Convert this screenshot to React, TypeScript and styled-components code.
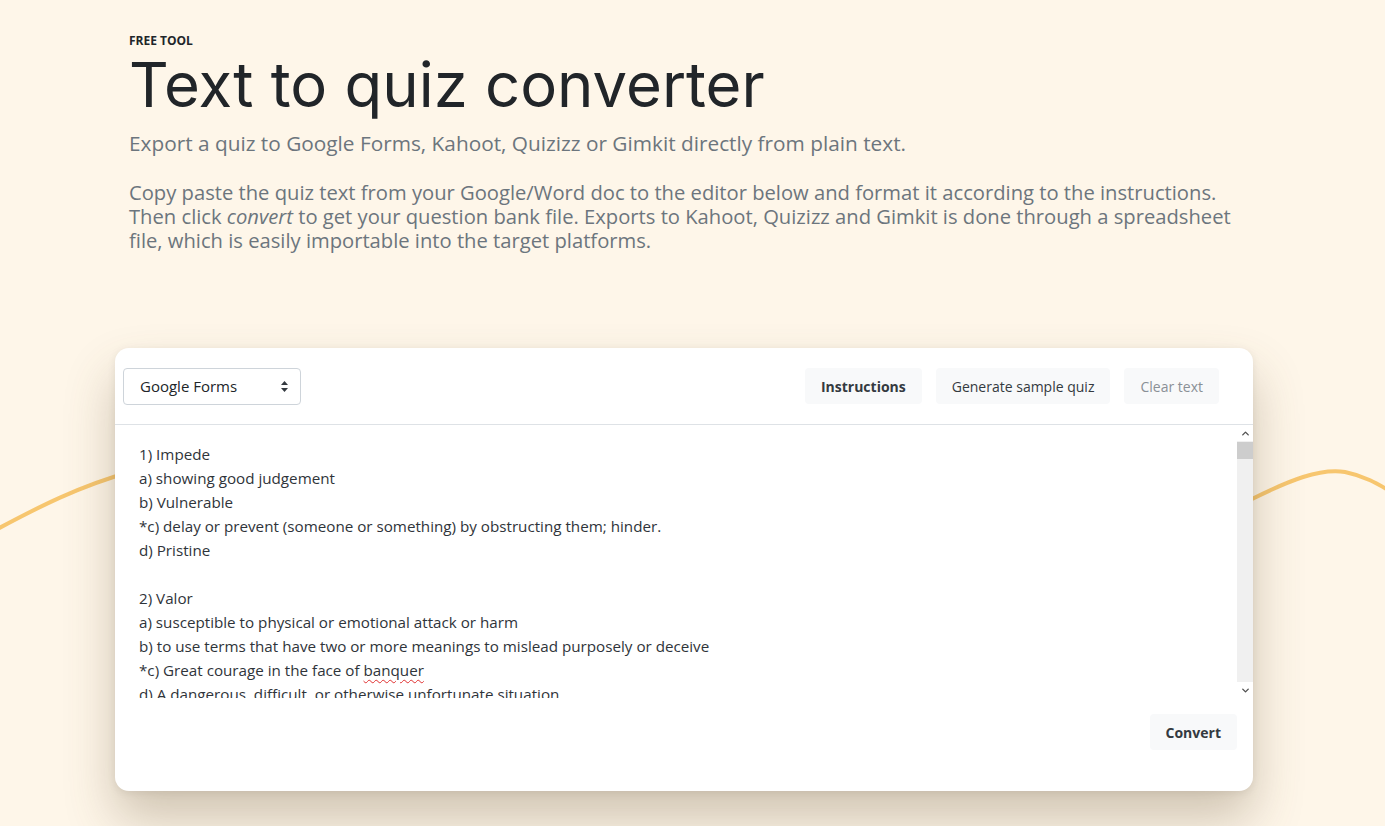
import React from "react";
import styled, { createGlobalStyle } from "styled-components";
import { ChevronUp, ChevronDown } from "lucide-react";

const GlobalStyle = createGlobalStyle`
    html, body {
        margin: 0;
        padding: 0;
        background-color: #fef6e9;
    }
    body {
        font-family: 'Open Sans', 'Liberation Sans', sans-serif;
        color: #212529;
    }
`;

const Page = styled.div`
    position: relative;
    width: 100%;
    min-height: 826px;
    overflow: hidden;
`;

const Wave = styled.svg`
    position: absolute;
    top: 0;
    left: 0;
    width: 100%;
    height: 826px;
    z-index: 0;
    pointer-events: none;
`;

const Header = styled.header`
    position: relative;
    z-index: 1;
    width: 1110px;
    padding: 33px 0 0 129px;
`;

const Kicker = styled.div`
    font-size: 12px;
    font-weight: 700;
    line-height: 16px;
    text-transform: uppercase;
    color: #212529;
`;

const Title = styled.h1`
    margin: 0;
    font-family: 'Inter', 'Liberation Sans', sans-serif;
    font-weight: 400;
    font-size: 61.6px;
    line-height: 72px;
    letter-spacing: 0;
    color: #212529;
`;

const Lead = styled.p`
    margin: 8px 0 0;
    font-size: 20.8px;
    line-height: 28px;
    color: #6c757d;
`;

const Body = styled.p`
    margin: 23px 0 0;
    font-size: 20.2px;
    line-height: 24px;
    color: #6c757d;
`;

const Card = styled.section`
    position: relative;
    z-index: 1;
    width: 1138px;
    margin: 96px 0 0 115px;
    background: #fff;
    border-radius: 14px;
    box-shadow: 0 28px 50px rgba(100, 80, 50, 0.3), 0 2px 8px rgba(0, 0, 0, 0.08);
    display: flex;
    flex-direction: column;
`;

const TopBar = styled.div`
    display: flex;
    align-items: center;
    justify-content: space-between;
    height: 76px;
    padding: 0 34px 0 8px;
    border-bottom: 1px solid #dee2e6;
`;

const SelectWrap = styled.div`
    position: relative;
    width: 178px;
`;

const Select = styled.select`
    appearance: none;
    width: 100%;
    height: 37px;
    padding: 0 32px 0 16px;
    border: 1px solid #ced4da;
    border-radius: 4px;
    background: #fff;
    font-family: 'Open Sans', sans-serif;
    font-size: 15px;
    color: #212529;
`;

const Caret = styled.svg`
    position: absolute;
    right: 12px;
    top: 12px;
    width: 9px;
    height: 13px;
    pointer-events: none;
`;

const Actions = styled.div`
    display: flex;
    gap: 14px;
`;

const Button = styled.button<{ $bold?: boolean; $muted?: boolean }>`
    height: 36px;
    padding: 0 16px;
    border: none;
    border-radius: 4px;
    background: #f8f9fa;
    font-family: 'Open Sans', sans-serif;
    font-size: 14px;
    font-weight: ${(p) => (p.$bold ? 700 : 400)};
    color: ${(p) => (p.$muted ? "#8a9096" : "#343a40")};
    cursor: pointer;
`;

const Editor = styled.div`
    display: flex;
    height: 273px;
`;

const EditorText = styled.div`
    flex: 1;
    overflow: hidden;
    padding: 17px 24px 0;
    font-family: 'Open Sans', sans-serif;
    font-size: 15.2px;
    line-height: 24px;
    color: #2f343a;
    white-space: pre-wrap;
`;

const Misspelled = styled.span`
    text-decoration: underline wavy #e03030;
    text-decoration-thickness: 1px;
    text-underline-offset: 3px;
`;

const ScrollBar = styled.div`
    width: 16px;
    display: flex;
    flex-direction: column;
    background: #f0f0f0;
`;

const ScrollButton = styled.div`
    height: 16px;
    display: flex;
    align-items: center;
    justify-content: center;
    background: #fff;
    color: #505050;
`;

const ScrollTrack = styled.div`
    flex: 1;
    display: flex;
    flex-direction: column;
    padding-top: 1px;
`;

const ScrollThumb = styled.div`
    height: 17px;
    background: #cdcdcd;
`;

const Footer = styled.div`
    display: flex;
    justify-content: flex-end;
    padding: 16px 16px 41px;
`;

const lines = [
    "1) Impede",
    "a) showing good judgement",
    "b) Vulnerable",
    "*c) delay or prevent (someone or something) by obstructing them; hinder.",
    "d) Pristine",
    "",
    "2) Valor",
    "a) susceptible to physical or emotional attack or harm",
    "b) to use terms that have two or more meanings to mislead purposely or deceive",
];

export default function App() {
    return (
        <Page>
            <GlobalStyle />
            <Wave viewBox="0 0 1385 826" preserveAspectRatio="none">
                <path
                    d="M-10,533 C40,506 80,486 130,472 C300,420 500,440 700,520 C900,590 1150,560 1250,500 C1290,480 1320,468 1345,472 C1365,476 1378,484 1395,494"
                    fill="none"
                    stroke="#f7c66f"
                    strokeWidth="4"
                />
            </Wave>
            <Header>
                <Kicker>Free tool</Kicker>
                <Title>Text to quiz converter</Title>
                <Lead>Export a quiz to Google Forms, Kahoot, Quizizz or Gimkit directly from plain text.</Lead>
                <Body>
                    Copy paste the quiz text from your Google/Word doc to the editor below and format it according to the instructions.
                    Then click <em>convert</em> to get your question bank file. Exports to Kahoot, Quizizz and Gimkit is done through a spreadsheet
                    file, which is easily importable into the target platforms.
                </Body>
            </Header>
            <Card>
                <TopBar>
                    <SelectWrap>
                        <Select defaultValue="forms">
                            <option value="forms">Google Forms</option>
                            <option value="kahoot">Kahoot</option>
                            <option value="quizizz">Quizizz</option>
                            <option value="gimkit">Gimkit</option>
                        </Select>
                        <Caret viewBox="0 0 9 13">
                            <path d="M4.5 1 L8 5 H1 Z" fill="#343a40" />
                            <path d="M4.5 12 L8 8 H1 Z" fill="#343a40" />
                        </Caret>
                    </SelectWrap>
                    <Actions>
                        <Button $bold>Instructions</Button>
                        <Button>Generate sample quiz</Button>
                        <Button $muted>Clear text</Button>
                    </Actions>
                </TopBar>
                <Editor>
                    <EditorText>
                        {lines.join("\n")}
                        {"\n*c) Great courage in the face of "}
                        <Misspelled>banquer</Misspelled>
                        {"\nd) A dangerous, difficult, or otherwise unfortunate situation\n\n3) Audacious"}
                    </EditorText>
                    <ScrollBar>
                        <ScrollButton>
                            <ChevronUp size={11} strokeWidth={3} />
                        </ScrollButton>
                        <ScrollTrack>
                            <ScrollThumb />
                        </ScrollTrack>
                        <ScrollButton>
                            <ChevronDown size={11} strokeWidth={3} />
                        </ScrollButton>
                    </ScrollBar>
                </Editor>
                <Footer>
                    <Button $bold>Convert</Button>
                </Footer>
            </Card>
        </Page>
    );
}
